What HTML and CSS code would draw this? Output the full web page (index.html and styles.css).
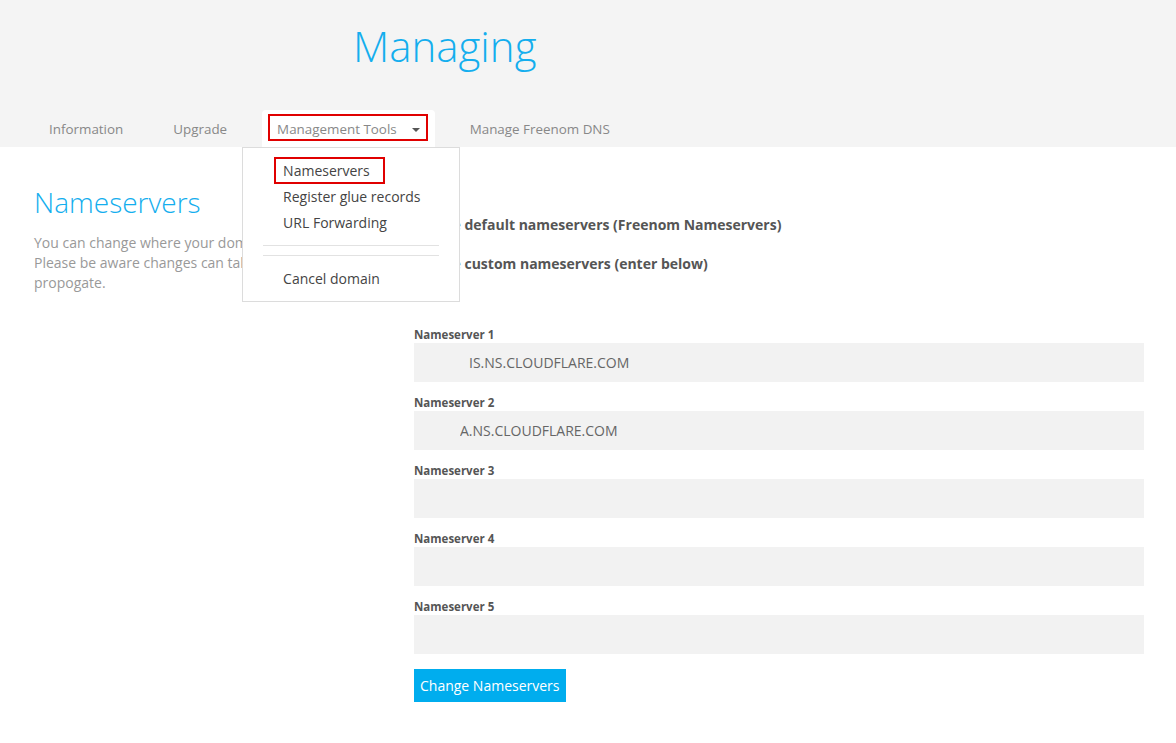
FILE: index.html
```html
<!DOCTYPE html>
<html lang="en">
<head>
<meta charset="utf-8">
<title>Managing</title>
<link rel="stylesheet" href="styles.css">
</head>
<body>
<header class="header">
  <h1 class="title">Managing</h1>
  <nav class="tabs">
    <a class="tab">Information</a>
    <a class="tab">Upgrade</a>
    <div class="tab tab-active">
      <span class="tab-label">Management Tools</span>
      <span class="caret"></span>
      <span class="mark mark-tab"></span>
      <ul class="dropdown">
        <li class="dd-item dd-marked">Nameservers<span class="mark mark-item"></span></li>
        <li class="dd-item">Register glue records</li>
        <li class="dd-item">URL Forwarding</li>
        <li class="dd-divider"></li>
        <li class="dd-item">Cancel domain</li>
      </ul>
    </div>
    <a class="tab">Manage Freenom DNS</a>
  </nav>
</header>
<main class="main">
  <section class="intro">
    <h2 class="intro-title">Nameservers</h2>
    <p class="intro-text">You can change where your domain points to here.<br>Please be aware changes can take up to 24 hours to<br>propogate.</p>
  </section>
  <section class="form">
    <label class="radio-row"><span class="radio"></span>Use default nameservers (Freenom Nameservers)</label>
    <label class="radio-row"><span class="radio radio-on"></span>Use custom nameservers (enter below)</label>
    <div class="fields">
      <div class="field">
        <label class="field-label">Nameserver 1</label>
        <input class="field-input in-1" type="text" value="IS.NS.CLOUDFLARE.COM">
      </div>
      <div class="field">
        <label class="field-label">Nameserver 2</label>
        <input class="field-input in-2" type="text" value="A.NS.CLOUDFLARE.COM">
      </div>
      <div class="field">
        <label class="field-label">Nameserver 3</label>
        <input class="field-input" type="text" value="">
      </div>
      <div class="field">
        <label class="field-label">Nameserver 4</label>
        <input class="field-input" type="text" value="">
      </div>
      <div class="field">
        <label class="field-label">Nameserver 5</label>
        <input class="field-input" type="text" value="">
      </div>
    </div>
    <button class="btn" type="button">Change Nameservers</button>
  </section>
</main>
</body>
</html>
```
FILE: styles.css
```css
* { box-sizing: border-box; }
html, body { margin: 0; padding: 0; }
body {
  font-family: "Open Sans", "Liberation Sans", sans-serif;
  font-size: 14px;
  color: #666;
  background: #fff;
  width: 1176px;
}
.header {
  background: #f4f4f4;
  height: 147px;
  display: flex;
  flex-direction: column;
}
.title {
  margin: 14px 0 0 0;
  padding-left: 353px;
  font-size: 42px;
  font-weight: 300;
  line-height: 63px;
  color: #14aeee;
}
.tabs {
  margin-top: 33px;
  padding-left: 34px;
  display: flex;
  gap: 20px;
  height: 37px;
}
.tab {
  position: relative;
  display: flex;
  align-items: center;
  padding: 0 15px;
  height: 37px;
  color: #888;
  font-size: 13.4px;
  text-decoration: none;
}
.tab-active {
  background: #fff;
  border-radius: 4px 4px 0 0;
}
.caret {
  margin-left: 15px;
  margin-top: 2px;
  width: 0;
  height: 0;
  border-left: 4px solid transparent;
  border-right: 4px solid transparent;
  border-top: 4px solid #555;
}
.mark {
  position: absolute;
  border: 2px solid #e00000;
  pointer-events: none;
}
.mark-tab {
  top: 4px;
  left: 6px;
  right: 7px;
  bottom: 6px;
}
.dropdown {
  position: absolute;
  top: 37px;
  left: -20px;
  width: 218px;
  margin: 0;
  padding: 10px 0 9px 0;
  list-style: none;
  background: #fff;
  border: 1px solid #dcdcdc;
  z-index: 5;
}
.dd-item {
  position: relative;
  padding-left: 40px;
  line-height: 26px;
  color: #444;
  font-size: 14px;
  white-space: nowrap;
}
.mark-item {
  top: -1px;
  left: 31px;
  width: 111px;
  height: 27px;
}
.dd-divider {
  margin: 9px 20px 10px 20px;
  height: 11px;
  border-top: 1px solid #e2e2e2;
  border-bottom: 1px solid #e2e2e2;
}
.main {
  display: flex;
  padding: 35px 32px 0 34px;
}
.intro {
  width: 380px;
  flex: none;
}
.intro-title {
  margin: 0;
  font-size: 28px;
  font-weight: 300;
  line-height: 40px;
  color: #14aeee;
}
.intro-text {
  margin: 11px 0 0 0;
  line-height: 20px;
  color: #999;
  white-space: nowrap;
}
.form {
  flex: 1;
  padding-top: 32px;
}
.radio-row {
  display: flex;
  align-items: center;
  height: 20px;
  margin-bottom: 19px;
  font-weight: 700;
  color: #555;
}
.radio {
  width: 13px;
  height: 13px;
  border: 1px solid #999;
  border-radius: 50%;
  margin-right: 8px;
}
.fields {
  margin-top: 53px;
}
.field {
  margin-bottom: 12px;
}
.field:last-child { margin-bottom: 15px; }
.field-label {
  display: block;
  font-size: 11.5px;
  font-weight: 700;
  line-height: 17px;
  color: #555;
}
.field-input {
  display: block;
  width: 100%;
  height: 39px;
  border: 0;
  background: #f2f2f2;
  font-family: "Open Sans", "Liberation Sans", sans-serif;
  font-size: 14px;
  color: #666;
  padding: 0 12px;
  outline: none;
}
.in-1 { padding-left: 55px; }
.in-2 { padding-left: 46px; }
.btn {
  display: block;
  height: 33px;
  padding: 0 6px;
  border: 0;
  background: #00adee;
  color: #fff;
  font-family: "Open Sans", "Liberation Sans", sans-serif;
  font-size: 14px;
}
```
